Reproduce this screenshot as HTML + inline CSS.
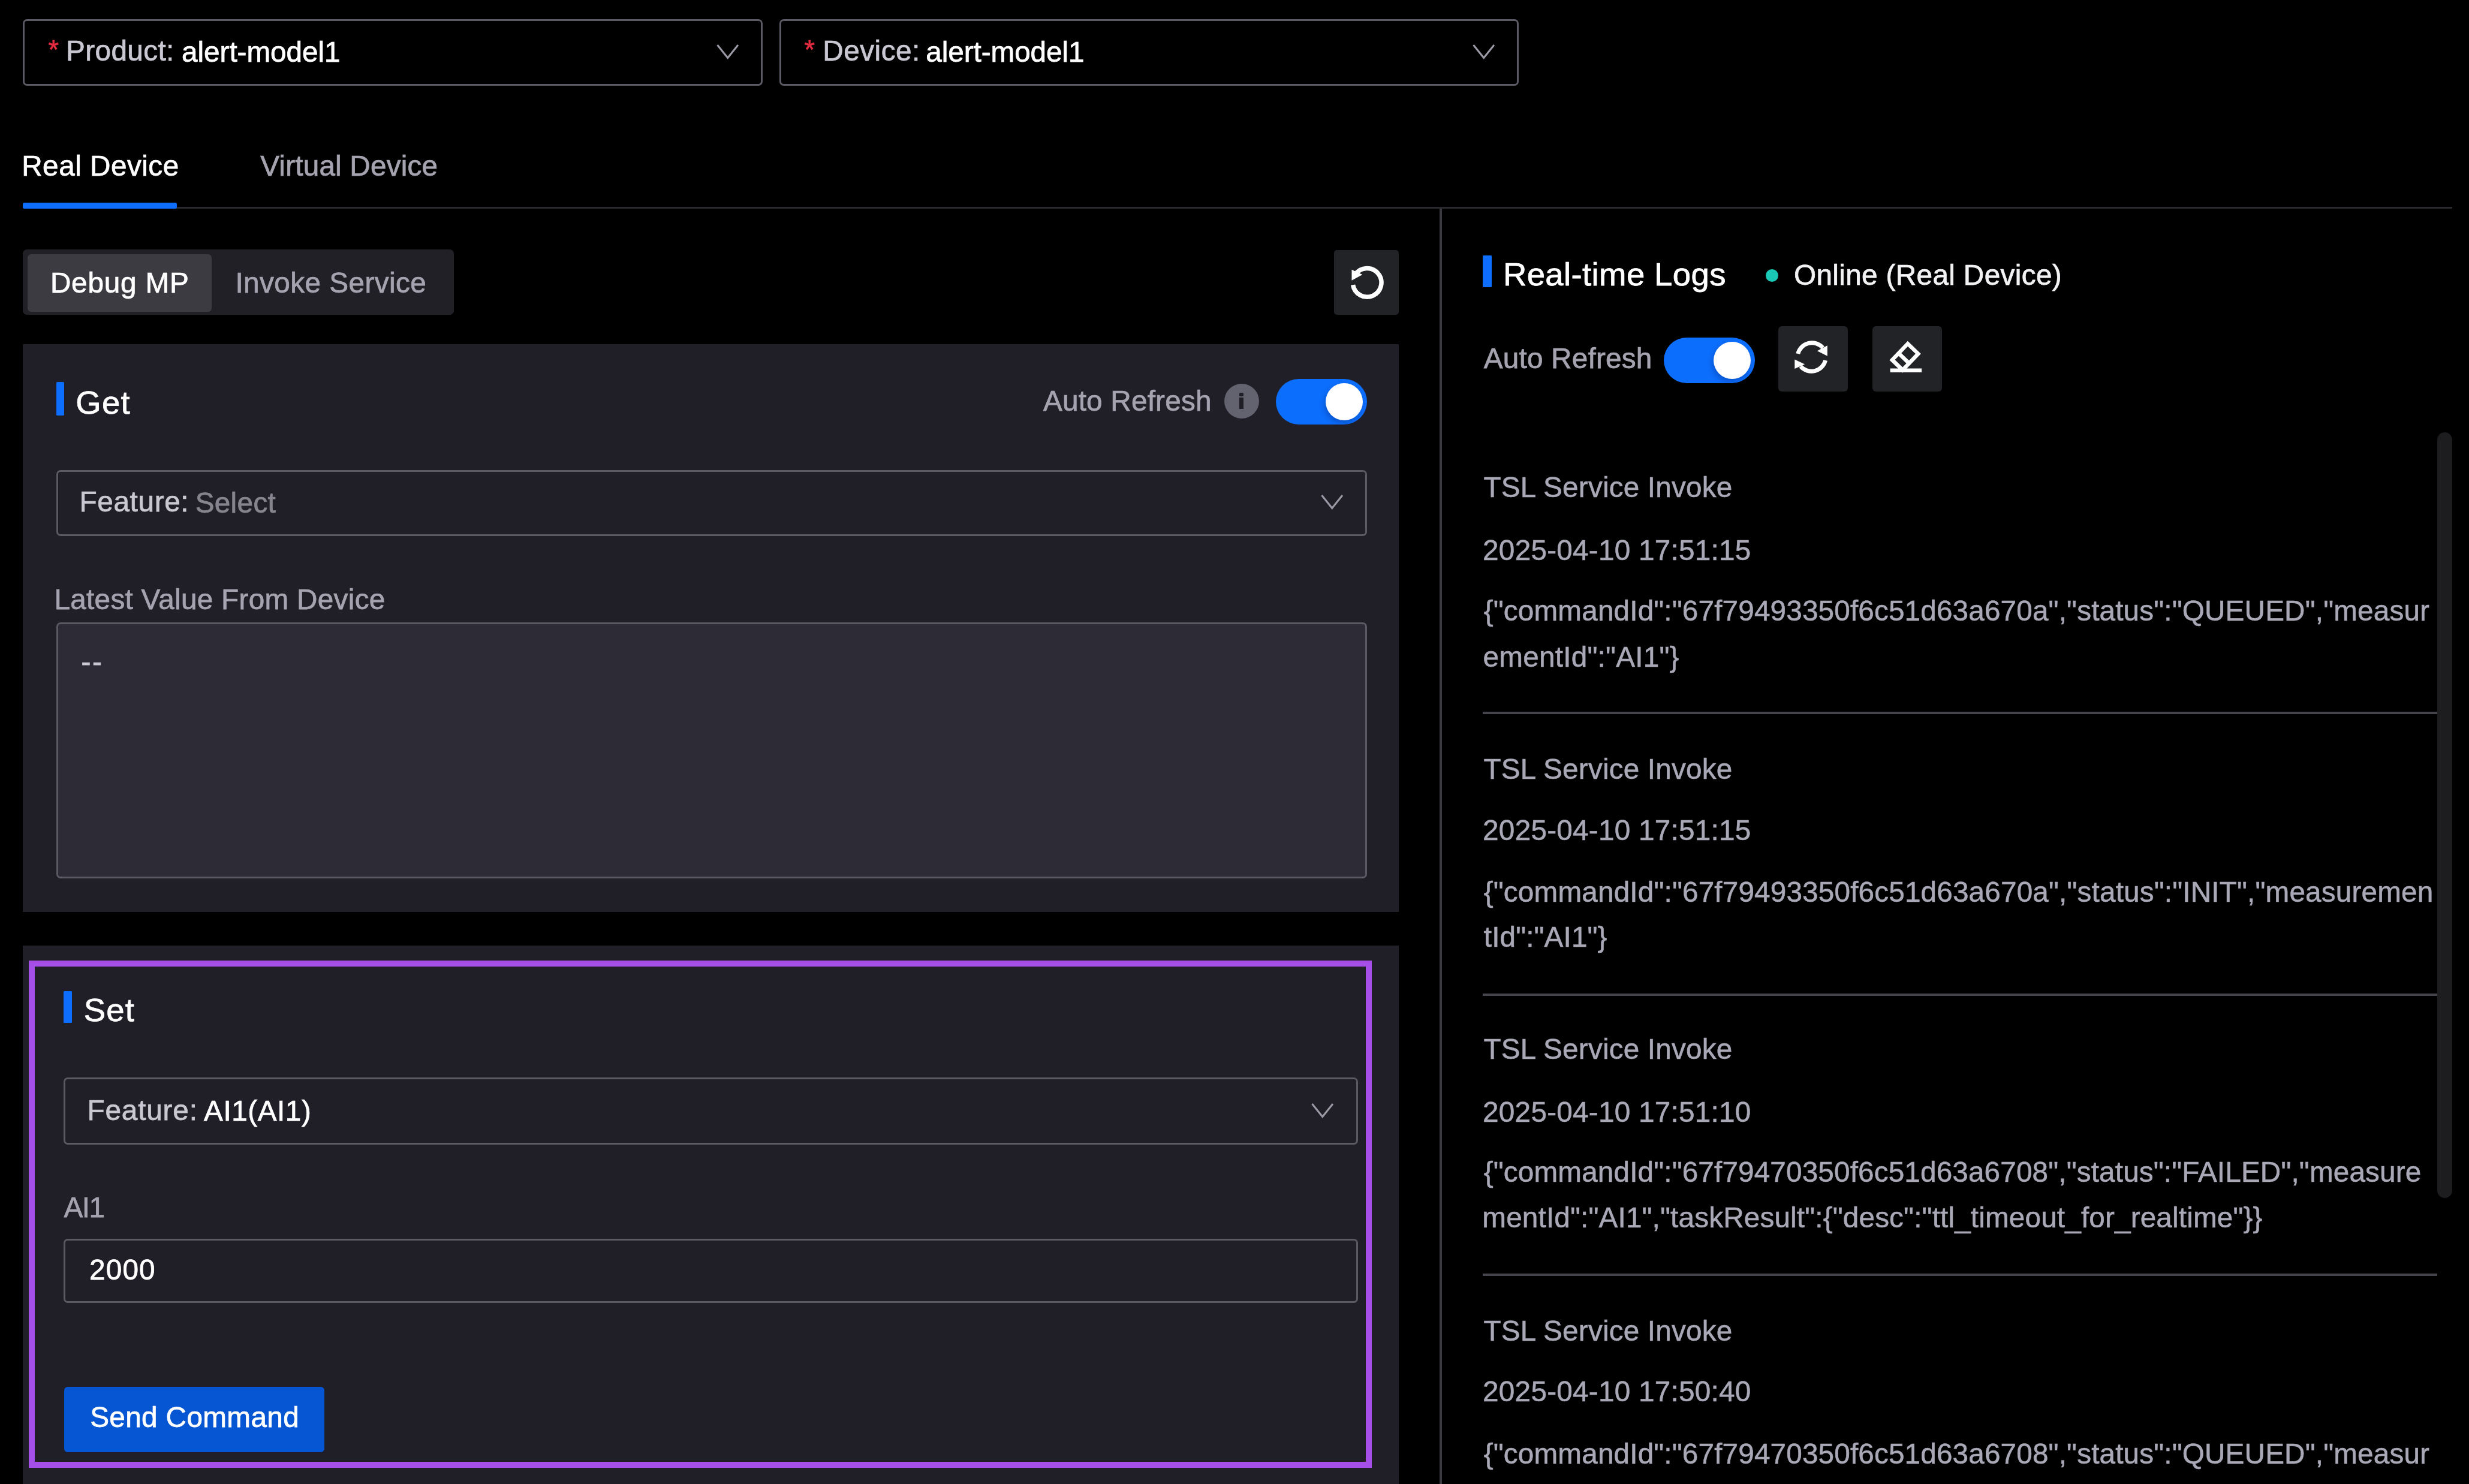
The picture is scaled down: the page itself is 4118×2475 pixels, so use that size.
<!DOCTYPE html><html><head><meta charset="utf-8"><title>Device Debug</title><style>
html,body{margin:0;padding:0;background:#000;overflow:hidden;}
#w{position:absolute;left:0;top:0;width:4118px;height:2560px;filter:blur(0.7px);}
body{width:4118px;height:2475px;overflow:hidden;position:relative;font-family:"Liberation Sans",sans-serif;}
.b{position:absolute;box-sizing:border-box;}
.t{position:absolute;white-space:nowrap;font-family:"Liberation Sans",sans-serif;-webkit-text-stroke:0.75px currentColor;}
.lg{-webkit-text-stroke:0.55px currentColor;}
</style></head><body><div id="w">
<div class="b" style="left:38.00px;top:32.30px;width:1234.20px;height:110.30px;border:3.2px solid #5a5964;border-radius:7px;"></div>
<div class="t" style="left:80.57px;top:42.51px;font-size:45px;line-height:80.0px;color:#e32b41;">*</div>
<div class="t" style="left:109.99px;top:44.98px;font-size:47.69px;line-height:80.0px;color:#c9c8d2;letter-spacing:0.394px;">Product:</div>
<div class="t" style="left:303.07px;top:47.48px;font-size:47.69px;line-height:80.0px;color:#fff;letter-spacing:-0.046px;">alert-model1</div>
<svg class="b" style="left:1191.75px;top:69.60px" width="43.5" height="32" viewBox="-4 -4 43.5 32"><path d="M0.5 1 L17.75 22.5 L35.0 1" fill="none" stroke="#9a99a5" stroke-width="3.1" stroke-linecap="butt" stroke-linejoin="miter"/></svg>
<div class="b" style="left:1299.60px;top:32.30px;width:1233.60px;height:110.30px;border:3.2px solid #5a5964;border-radius:7px;"></div>
<div class="t" style="left:1341.57px;top:42.51px;font-size:45px;line-height:80.0px;color:#e32b41;">*</div>
<div class="t" style="left:1372.29px;top:44.98px;font-size:47.69px;line-height:80.0px;color:#c9c8d2;letter-spacing:0.508px;">Device:</div>
<div class="t" style="left:1544.37px;top:47.48px;font-size:47.69px;line-height:80.0px;color:#fff;letter-spacing:-0.083px;">alert-model1</div>
<svg class="b" style="left:2453.35px;top:69.60px" width="43.5" height="32" viewBox="-4 -4 43.5 32"><path d="M0.5 1 L17.75 22.5 L35.0 1" fill="none" stroke="#9a99a5" stroke-width="3.1" stroke-linecap="butt" stroke-linejoin="miter"/></svg>
<div class="b" style="left:38.00px;top:344.90px;width:4052.20px;height:3.30px;background:#2a2930;"></div>
<div class="b" style="left:38.20px;top:337.80px;width:256.60px;height:10.10px;background:#0d6efd;border-radius:3px;"></div>
<div class="t" style="left:36.19px;top:237.48px;font-size:47.69px;line-height:80.0px;color:#fff;letter-spacing:0.494px;">Real Device</div>
<div class="t" style="left:434.19px;top:237.48px;font-size:47.69px;line-height:80.0px;color:#a4a3af;letter-spacing:0.200px;">Virtual Device</div>
<div class="b" style="left:2401.30px;top:348.00px;width:3.30px;height:2130.00px;background:#3a3941;"></div>
<div class="b" style="left:38.00px;top:416.00px;width:719.00px;height:109.00px;background:#212026;border-radius:7px;"></div>
<div class="b" style="left:45.50px;top:424.00px;width:307.50px;height:96.00px;background:#3c3b41;border-radius:6px;"></div>
<div class="t" style="left:83.89px;top:432.48px;font-size:47.69px;line-height:80.0px;color:#fff;letter-spacing:0.788px;">Debug MP</div>
<div class="t" style="left:392.40px;top:432.48px;font-size:47.69px;line-height:80.0px;color:#a4a3af;letter-spacing:0.435px;">Invoke Service</div>
<div class="b" style="left:2224.50px;top:416.50px;width:108.50px;height:108.50px;background:#222327;border-radius:5px;"></div>
<svg class="b" style="left:2224.5px;top:416.5px" width="108.5" height="108.5" viewBox="2224.5 416.5 108.5 108.5"><path d="M 2256.1 474.6 A 23.85 23.85 0 1 0 2260.1 457.2" fill="none" stroke="#fff" stroke-width="7.5"/><polygon points="2254.0,449.2 2254.0,467.2 2271.9,457.4" fill="#fff"/></svg>
<div class="b" style="left:38.00px;top:573.50px;width:2295.40px;height:947.00px;background:#201f28;"></div>
<div class="b" style="left:93.70px;top:637.00px;width:13.30px;height:56.00px;background:#0d6efd;border-radius:1.5px;"></div>
<div class="t" style="left:126.26px;top:631.62px;font-size:54.5px;line-height:80.0px;color:#fff;letter-spacing:1.240px;">Get</div>
<div class="t" style="left:1739.91px;top:628.98px;font-size:47.69px;line-height:80.0px;color:#a4a3af;letter-spacing:0.206px;">Auto Refresh</div>
<div class="b" style="left:2041.50px;top:639.70px;width:58.60px;height:58.60px;background:#63626f;border-radius:50%;"></div>
<div class="b" style="left:2067.10px;top:654.80px;width:7.20px;height:6.60px;background:#201f28;border-radius:1.5px;"></div>
<div class="b" style="left:2067.10px;top:663.40px;width:7.20px;height:19.00px;background:#201f28;"></div>
<div class="b" style="left:2127.70px;top:632.00px;width:152.4px;height:76.4px;background:#0c6efc;border-radius:38.2px;overflow:hidden;"><div class="b" style="left:83.40px;top:7.2px;width:62px;height:62px;background:#fff;border-radius:50%;box-shadow:-2px 5px 10px rgba(0,20,90,.28);"></div></div>
<div class="b" style="left:93.70px;top:784.20px;width:2186.50px;height:109.80px;border:3.2px solid #5a5964;border-radius:7px;"></div>
<div class="t" style="left:132.59px;top:796.78px;font-size:47.69px;line-height:80.0px;color:#c9c8d2;letter-spacing:0.622px;">Feature:</div>
<div class="t" style="left:325.63px;top:798.68px;font-size:47.69px;line-height:80.0px;color:#85848f;letter-spacing:0.334px;">Select</div>
<svg class="b" style="left:2199.55px;top:820.60px" width="43.5" height="32" viewBox="-4 -4 43.5 32"><path d="M0.5 1 L17.75 22.5 L35.0 1" fill="none" stroke="#9a99a5" stroke-width="3.1" stroke-linecap="butt" stroke-linejoin="miter"/></svg>
<div class="t" style="left:90.39px;top:959.98px;font-size:47.69px;line-height:80.0px;color:#a4a3af;letter-spacing:0.297px;">Latest Value From Device</div>
<div class="b" style="left:93.70px;top:1038.00px;width:2186.50px;height:427.00px;background:#2c2b36;border:3.2px solid #5a5964;border-radius:7px;"></div>
<div class="t" style="left:135.58px;top:1064.48px;font-size:47.69px;line-height:80.0px;color:#c9c8d2;letter-spacing:2.472px;">--</div>
<div class="b" style="left:38.00px;top:1576.50px;width:2295.40px;height:900.00px;background:#201f28;"></div>
<div class="b" style="left:48.00px;top:1602.00px;width:2240.10px;height:846.00px;border:10.1px solid #a64fe8;"></div>
<div class="b" style="left:106.30px;top:1652.50px;width:13.50px;height:53.70px;background:#0d6efd;border-radius:1.5px;"></div>
<div class="t" style="left:139.83px;top:1644.82px;font-size:54.5px;line-height:80.0px;color:#fff;letter-spacing:1.081px;">Set</div>
<div class="b" style="left:106.20px;top:1796.80px;width:2158.80px;height:112.60px;border:3.2px solid #5a5964;border-radius:7px;"></div>
<div class="t" style="left:145.49px;top:1811.78px;font-size:47.69px;line-height:80.0px;color:#c9c8d2;letter-spacing:0.837px;">Feature:</div>
<div class="t" style="left:340.11px;top:1812.98px;font-size:47.69px;line-height:80.0px;color:#fff;letter-spacing:0.533px;">AI1(AI1)</div>
<svg class="b" style="left:2184.25px;top:1836.20px" width="43.5" height="32" viewBox="-4 -4 43.5 32"><path d="M0.5 1 L17.75 22.5 L35.0 1" fill="none" stroke="#9a99a5" stroke-width="3.1" stroke-linecap="butt" stroke-linejoin="miter"/></svg>
<div class="t" style="left:106.51px;top:1974.48px;font-size:47.69px;line-height:80.0px;color:#a4a3af;letter-spacing:-1.578px;">AI1</div>
<div class="b" style="left:106.20px;top:2066.20px;width:2159.00px;height:106.80px;border:3.2px solid #5a5964;border-radius:7px;"></div>
<div class="t" style="left:148.90px;top:2078.48px;font-size:47.69px;line-height:80.0px;color:#fff;letter-spacing:1.223px;">2000</div>
<div class="b" style="left:106.70px;top:2312.50px;width:434.50px;height:109.00px;background:#0656d3;border-radius:6px;"></div>
<div class="t" style="left:150.13px;top:2324.48px;font-size:47.69px;line-height:80.0px;color:#fff;letter-spacing:0.368px;">Send Command</div>
<div class="b" style="left:2473.00px;top:426.30px;width:15.00px;height:53.20px;background:#0d6efd;border-radius:1.5px;"></div>
<div class="t" style="left:2506.93px;top:417.72px;font-size:54.5px;line-height:80.0px;color:#fff;letter-spacing:0.385px;">Real-time Logs</div>
<div class="b" style="left:2944.80px;top:448.80px;width:21.20px;height:21.20px;background:#19c9b5;border-radius:50%;"></div>
<div class="t" style="left:2991.94px;top:419.48px;font-size:47.69px;line-height:80.0px;color:#f2f2f4;letter-spacing:0.356px;">Online (Real Device)</div>
<div class="t" style="left:2474.71px;top:558.48px;font-size:47.69px;line-height:80.0px;color:#a4a3af;letter-spacing:0.206px;">Auto Refresh</div>
<div class="b" style="left:2774.80px;top:563.00px;width:152.4px;height:76.4px;background:#0c6efc;border-radius:38.2px;overflow:hidden;"><div class="b" style="left:83.40px;top:7.2px;width:62px;height:62px;background:#fff;border-radius:50%;box-shadow:-2px 5px 10px rgba(0,20,90,.28);"></div></div>
<div class="b" style="left:2965.80px;top:543.50px;width:116.50px;height:109.00px;background:#222327;border-radius:6px;"></div>
<div class="b" style="left:3122.90px;top:543.50px;width:116.50px;height:109.00px;background:#222327;border-radius:6px;"></div>
<svg class="b" style="left:2965.8px;top:543.5px" width="116.5" height="109" viewBox="2965.8 543.5 116.5 109"><path d="M 2998.6 589.5 A 24 24 0 0 1 3040 579.5" fill="none" stroke="#fff" stroke-width="6.9"/><path d="M 3044.4 600.5 A 24 24 0 0 1 3003 610.5" fill="none" stroke="#fff" stroke-width="6.9"/><polygon points="3047.6,575.8 3047.6,593.2 3030.7,584.8" fill="#fff"/><polygon points="2993.1,599.1 2993.1,614.6 3010,606.9" fill="#fff"/></svg>
<svg class="b" style="left:3122.9px;top:543.5px" width="116.5" height="109" viewBox="3122.9 543.5 116.5 109"><g transform="translate(3181.7 568.2) rotate(43.8)"><path fill="#fff" fill-rule="evenodd" d="M0 0h30.6v44h-30.6z M6.4 6.4v15.6h17.8v-15.6z M6.4 28.4v9h17.8v-9z"/></g><rect x="3152.5" y="614" width="52.5" height="6.5" fill="#fff"/></svg>
<div class="b" style="left:4064.60px;top:720.70px;width:25.40px;height:1276.90px;background:#1d1d20;border-radius:12.7px;"></div>
<div class="t lg" style="left:2474.43px;top:773.48px;font-size:47.69px;line-height:80.0px;color:#a8a8b7;letter-spacing:0.187px;">TSL Service Invoke</div>
<div class="t lg" style="left:2473.10px;top:877.88px;font-size:47.69px;line-height:80.0px;color:#a8a8b7;letter-spacing:0.249px;">2025-04-10 17:51:15</div>
<div class="t lg" style="left:2474.71px;top:978.88px;font-size:47.69px;line-height:80.0px;color:#a8a8b7;letter-spacing:0.145px;">{&quot;commandId&quot;:&quot;67f79493350f6c51d63a670a&quot;,&quot;status&quot;:&quot;QUEUED&quot;,&quot;measur</div>
<div class="t lg" style="left:2473.47px;top:1055.88px;font-size:47.69px;line-height:80.0px;color:#a8a8b7;letter-spacing:0.231px;">ementId&quot;:&quot;AI1&quot;}</div>
<div class="b" style="left:2473.00px;top:1187.40px;width:1592.00px;height:3.20px;background:#45444d;"></div>
<div class="t lg" style="left:2474.43px;top:1243.48px;font-size:47.69px;line-height:80.0px;color:#a8a8b7;letter-spacing:0.187px;">TSL Service Invoke</div>
<div class="t lg" style="left:2473.10px;top:1344.68px;font-size:47.69px;line-height:80.0px;color:#a8a8b7;letter-spacing:0.249px;">2025-04-10 17:51:15</div>
<div class="t lg" style="left:2474.71px;top:1448.38px;font-size:47.69px;line-height:80.0px;color:#a8a8b7;letter-spacing:0.155px;">{&quot;commandId&quot;:&quot;67f79493350f6c51d63a670a&quot;,&quot;status&quot;:&quot;INIT&quot;,&quot;measuremen</div>
<div class="t lg" style="left:2474.78px;top:1522.88px;font-size:47.69px;line-height:80.0px;color:#a8a8b7;letter-spacing:0.122px;">tId&quot;:&quot;AI1&quot;}</div>
<div class="b" style="left:2473.00px;top:1657.40px;width:1592.00px;height:3.20px;background:#45444d;"></div>
<div class="t lg" style="left:2474.43px;top:1710.48px;font-size:47.69px;line-height:80.0px;color:#a8a8b7;letter-spacing:0.187px;">TSL Service Invoke</div>
<div class="t lg" style="left:2473.10px;top:1814.68px;font-size:47.69px;line-height:80.0px;color:#a8a8b7;letter-spacing:0.242px;">2025-04-10 17:51:10</div>
<div class="t lg" style="left:2474.71px;top:1914.58px;font-size:47.69px;line-height:80.0px;color:#a8a8b7;letter-spacing:0.135px;">{&quot;commandId&quot;:&quot;67f79470350f6c51d63a6708&quot;,&quot;status&quot;:&quot;FAILED&quot;,&quot;measure</div>
<div class="t lg" style="left:2472.33px;top:1990.88px;font-size:47.69px;line-height:80.0px;color:#a8a8b7;letter-spacing:0.146px;">mentId&quot;:&quot;AI1&quot;,&quot;taskResult&quot;:{&quot;desc&quot;:&quot;ttl_timeout_for_realtime&quot;}}</div>
<div class="b" style="left:2473.00px;top:2124.40px;width:1592.00px;height:3.20px;background:#45444d;"></div>
<div class="t lg" style="left:2474.43px;top:2179.68px;font-size:47.69px;line-height:80.0px;color:#a8a8b7;letter-spacing:0.187px;">TSL Service Invoke</div>
<div class="t lg" style="left:2473.10px;top:2280.88px;font-size:47.69px;line-height:80.0px;color:#a8a8b7;letter-spacing:0.242px;">2025-04-10 17:50:40</div>
<div class="t lg" style="left:2474.71px;top:2384.58px;font-size:47.69px;line-height:80.0px;color:#a8a8b7;letter-spacing:0.145px;">{&quot;commandId&quot;:&quot;67f79470350f6c51d63a6708&quot;,&quot;status&quot;:&quot;QUEUED&quot;,&quot;measur</div>
</div></body></html>
